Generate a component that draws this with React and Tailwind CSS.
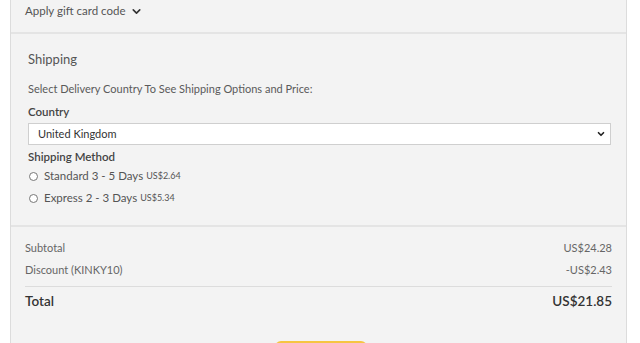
import { ChevronDown } from 'lucide-react';

const font = { fontFamily: 'Lato, "Open Sans", sans-serif' };

function Radio({ label, price }) {
  return (
    <label className="flex items-center h-[22px] text-[11.5px] text-[#555]">
      <span className="w-[9px] h-[9px] rounded-full border border-[#777] bg-white mr-[6px]" />
      <span>{label}</span>
      <span className="ml-[3px] text-[9px]">{price}</span>
    </label>
  );
}

export default function App() {
  return (
    <div className="w-[640px] h-[343px] bg-white overflow-hidden" style={font}>
      <div className="ml-[10px] w-[617px] h-full bg-[#f3f3f3] border-l border-r border-[#dcdcdc]">
        {/* Gift card */}
        <div className="h-[34px] pl-[14px] pb-[10px] flex items-center text-[11.5px] text-[#555] border-b-2 border-[#e4e4e4]">
          Apply gift card code
          <ChevronDown className="w-[13px] h-[13px] ml-[4px] text-[#333]" strokeWidth={3} />
        </div>

        {/* Shipping */}
        <div className="px-[17px] pt-[16px] pb-[16px] border-b-2 border-[#e4e4e4]">
          <h2 className="text-[13px] text-[#555] leading-[18px]">Shipping</h2>
          <p className="mt-[14px] text-[11px] text-[#5a5a5a] leading-[14px]">
            Select Delivery Country To See Shipping Options and Price:
          </p>
          <div className="mt-[9px] text-[11.5px] font-semibold text-[#444] leading-[14px]">Country</div>
          <div className="mt-[4px] mr-[-2px] h-[22px] bg-white border border-[#cfcfcf] flex items-center justify-between pl-[9px] pr-[4px] text-[11px] text-[#333]">
            <span>United Kingdom</span>
            <ChevronDown className="w-[10px] h-[10px] text-[#222]" strokeWidth={4} />
          </div>
          <div className="mt-[5px] text-[11.5px] font-semibold text-[#444] leading-[14px]">Shipping Method</div>
          <div className="mt-[1px] ml-[1px]">
            <Radio label="Standard 3 - 5 Days" price="US$2.64" />
            <Radio label="Express 2 - 3 Days" price="US$5.34" />
          </div>
        </div>

        {/* Totals */}
        <div className="px-[14px] pt-[10px]">
          <div className="flex justify-between h-[22px] items-center text-[11px] text-[#666]">
            <span>Subtotal</span>
            <span>US$24.28</span>
          </div>
          <div className="flex justify-between h-[22px] items-center text-[11px] text-[#666]">
            <span>Discount (KINKY10)</span>
            <span>-US$2.43</span>
          </div>
          <div className="mt-[5px] border-t border-[#dcdcdc] flex justify-between items-center h-[30px] text-[13.5px] font-semibold text-[#333]">
            <span>Total</span>
            <span>US$21.85</span>
          </div>
          <div className="flex justify-center mt-[25px]">
            <div className="w-[92px] h-[20px] rounded-[6px] bg-[#f6c542] ml-[5px]" />
          </div>
        </div>
      </div>
    </div>
  );
}
